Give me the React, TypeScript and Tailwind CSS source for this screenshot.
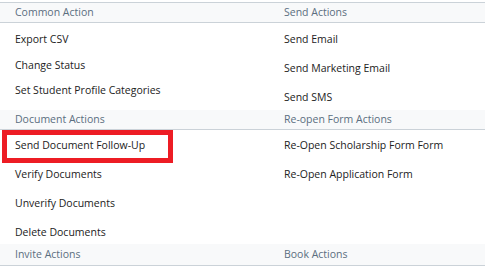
import React from "react";

const font = { fontFamily: '"Open Sans", "Noto Sans", sans-serif' };

function Header({ left, right, tall }: { left: string; right: string; tall?: boolean }) {
  return (
    <div
      className={`grid grid-cols-[242px_1fr] items-center bg-[#f8f9fa] border-b border-[#cbd2d8] text-[10.5px] text-[#5b6e80] ${
        tall ? "h-[22px]" : "h-[20px]"
      }`}
    >
      <div className="pl-[15px]">{left}</div>
      <div className="pl-[42px]">{right}</div>
    </div>
  );
}

function Item({ label, flagged }: { label: string; flagged?: boolean }) {
  return (
    <div className="relative h-[17px] leading-[17px] text-[10.5px] text-[#222]">
      {label}
      {flagged && (
        <span className="absolute -left-[13px] -top-[7px] w-[171px] h-[33px] border-[5px] border-[#ed1c24]" />
      )}
    </div>
  );
}

export default function App() {
  return (
    <div className="w-[485px] h-[267px] bg-white pt-[2px] overflow-hidden" style={font}>
      <div className="border-t border-[#cbd2d8]">
        <Header left="Common Action" right="Send Actions" />
        <div className="grid grid-cols-[242px_1fr] pt-[8px] pb-[4px]">
          <div className="pl-[15px] flex flex-col gap-[8.5px]">
            <Item label="Export CSV" />
            <Item label="Change Status" />
            <Item label="Set Student Profile Categories" />
          </div>
          <div className="pl-[42px] flex flex-col gap-[12px]">
            <Item label="Send Email" />
            <Item label="Send Marketing Email" />
            <Item label="Send SMS" />
          </div>
        </div>

        <Header left="Document Actions" right="Re-open Form Actions" />
        <div className="grid grid-cols-[242px_1fr] pt-[7px] pb-[3px]">
          <div className="pl-[15px] flex flex-col gap-[12px]">
            <Item label="Send Document Follow-Up" flagged />
            <Item label="Verify Documents" />
            <Item label="Unverify Documents" />
            <Item label="Delete Documents" />
          </div>
          <div className="pl-[42px] flex flex-col gap-[12px]">
            <Item label="Re-Open Scholarship Form Form" />
            <Item label="Re-Open Application Form" />
          </div>
        </div>

        <Header left="Invite Actions" right="Book Actions" tall />
      </div>
    </div>
  );
}
